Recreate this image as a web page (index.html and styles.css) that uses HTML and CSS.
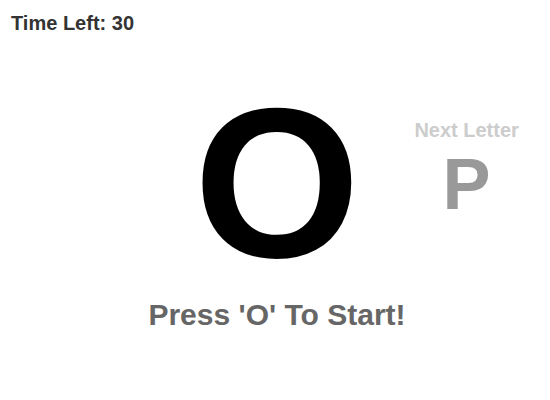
FILE: index.html
```html
<!DOCTYPE html>
<html>

	<head>
		<meta charset="UTF-8">
		<title>Typing Game</title>
		<link rel="stylesheet" href="styles.css">
	</head>

	<body>
		<div class="timer" id="timer">Time Left: <span id="time">30</span></div>
		<div class="stage">
			<div class="side"></div>
			<div class="current" id="current">O</div>
			<div class="side next">
				<div class="next-label">Next Letter</div>
				<div class="next-letter" id="next">P</div>
			</div>
		</div>
		<div class="message" id="message">Press 'O' To Start!</div>
	</body>

</html>
```

FILE: styles.css
```css
* {
	margin: 0;
	padding: 0;
}

body {
	font-family: "Liberation Sans", Arial, sans-serif;
	font-weight: bold;
	background: #fff;
	padding: 10px 11px;
}

.timer {
	font-size: 20px;
	line-height: 26px;
	color: #333;
}

.stage {
	display: grid;
	grid-template-columns: 1fr auto 1fr;
	margin-top: 57px;
	padding-left: 4px;
}

.current {
	font-size: 214px;
	line-height: 180px;
	height: 180px;
	color: #000;
	text-align: center;
}

.next {
	text-align: center;
	padding-left: 34px;
	padding-top: 25px;
}

.next-label {
	font-size: 20px;
	line-height: 24px;
	color: #ccc;
}

.next-letter {
	font-size: 72px;
	line-height: 72px;
	margin-top: 6px;
	color: #999;
}

.message {
	font-size: 30px;
	line-height: 36px;
	color: #666;
	text-align: center;
	margin-top: 24px;
	padding-left: 4px;
}
```
